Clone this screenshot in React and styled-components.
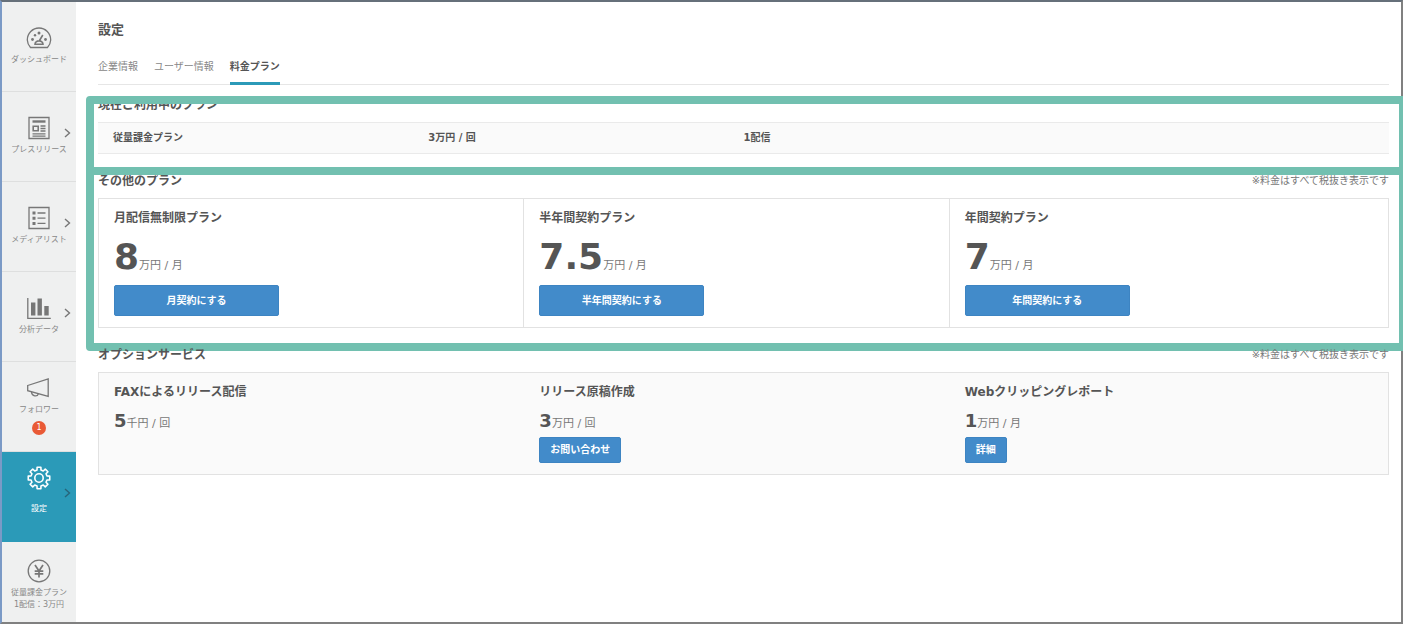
import React, { useState } from 'react'
import styled, { createGlobalStyle } from 'styled-components'

const GlobalStyle = createGlobalStyle`
  * {
    box-sizing: border-box;
  }

  body {
    margin: 0;
    overflow-x: hidden;
    background: #fff;
    color: #555;
    font-family: 'DejaVu Sans', 'Noto Sans CJK JP', sans-serif;
    font-size: 12px;
    line-height: 18px;
  }

  button {
    font-family: inherit;
  }
`

const Frame = styled.div`
  display: flex;
  min-height: 100vh;
  border: 2px solid #808080;
  border-top-color: #66707a;
  border-left-color: #7b9ac6;
`

const Sidebar = styled.nav`
  flex: none;
  width: 74px;
  background: #eff0f0;
`

const NavItem = styled.a`
  position: relative;
  display: flex;
  flex-direction: column;
  align-items: center;
  height: 90px;
  padding-top: ${(props) => props.$top || 24}px;
  border-bottom: 1px solid #dedfdf;
  color: #888;
  font-size: 8px;
  line-height: 12px;
  text-align: center;
  text-decoration: none;
  white-space: pre-line;

  &:last-child {
    height: auto;
    border-bottom: 0;
  }

  ${(props) =>
    props.$active &&
    `
    background: #2b9ab8;
    border-color: #2b9ab8;
    color: #fff;
  `}
`

const NavIcon = styled.svg`
  flex: none;
  width: 26px;
  height: 24px;
  margin-bottom: ${(props) => props.$gap || 4}px;
  fill: none;
  stroke: ${(props) => (props.$active ? '#fff' : '#777')};
  stroke-width: 1.3;
`

const Chevron = styled.svg`
  position: absolute;
  top: 36px;
  right: 5px;
  width: 7px;
  height: 10px;
  fill: none;
  stroke: ${(props) => (props.$active ? '#27657a' : '#777')};
  stroke-width: 1.4;
`

const Badge = styled.span`
  width: 14px;
  height: 14px;
  margin-top: 5px;
  border-radius: 50%;
  background: #e95a36;
  color: #fff;
  font-size: 8px;
  line-height: 14px;
`

const Main = styled.main`
  flex: 1;
  min-width: 0;
  padding: 18px 12px 24px 22px;
`

const PageTitle = styled.h1`
  margin: 0;
  font-size: 13px;
  line-height: 20px;
`

const Tabs = styled.div`
  display: flex;
  gap: 16px;
  margin: 16px 0 11px;
  border-bottom: 1px solid #e6e6e6;
`

const Tab = styled.button`
  margin: 0 0 -1px;
  padding: 0 0 4px;
  border: 0;
  border-bottom: 3px solid ${(props) => (props.$active ? '#2b9ab8' : 'transparent')};
  background: none;
  color: ${(props) => (props.$active ? '#555' : '#888')};
  font-size: 10px;
  font-weight: ${(props) => (props.$active ? 'bold' : 'normal')};
  line-height: 22px;
  cursor: pointer;
`

const Section = styled.section`
  position: relative;
  margin-bottom: 18px;
`

const SectionHead = styled.header`
  display: flex;
  justify-content: space-between;
  margin-bottom: 8px;
`

const SectionTitle = styled.h2`
  margin: 0;
  font-size: 12px;
  line-height: 18px;
`

const Note = styled.small`
  color: #777;
  font-size: 10px;
`

// Marker frame drawn over a section, it runs past the right edge of the page
const Highlight = styled.div`
  position: absolute;
  top: ${(props) => props.$top}px;
  right: -18px;
  bottom: ${(props) => props.$bottom}px;
  left: -12px;
  border: 8px solid #72c0b0;
  border-radius: 4px;
  pointer-events: none;
`

const CurrentPlan = styled.div`
  padding: 0 15px;
  border: 1px solid #eaeaea;
  border-width: 1px 0;
  background: #fafafa;
`

const PlanTable = styled.table`
  width: 100%;
  border-collapse: collapse;
  table-layout: fixed;
  font-size: 10px;
  font-weight: bold;

  td {
    width: 25%;
    padding: 0;
    line-height: 30px;
  }

  td:last-child {
    width: 50%;
  }
`

const Panel = styled.div`
  display: grid;
  grid-template-columns: 33% 33% 1fr;
  border: 1px solid #e2e2e2;
  background: ${(props) => (props.$muted ? '#fafafa' : '#fff')};
`

const Card = styled.div`
  padding: 10px 15px 11px;

  ${(props) =>
    props.$divided &&
    `
    &:not(:last-child) {
      border-right: 1px solid #e2e2e2;
    }
  `}
`

const CardTitle = styled.h3`
  margin: 0;
  font-size: 12px;
  line-height: 18px;
`

const Price = styled.p`
  margin: ${(props) => (props.$large ? '12px 0 10px' : '8px 0 4px')};
  color: #777;
  font-size: 11px;
  line-height: 12px;

  strong {
    color: #555;
    font-size: ${(props) => (props.$large ? 36 : 18)}px;
    line-height: ${(props) => (props.$large ? 36 : 24)}px;
  }
`

const Button = styled.button`
  display: block;
  width: ${(props) => (props.$wide ? '165px' : 'auto')};
  padding: 0 10px;
  border: 1px solid #3d84c2;
  border-radius: 2px;
  background: #428bca;
  color: #fff;
  font-size: 10px;
  font-weight: bold;
  line-height: ${(props) => (props.$wide ? 29 : 24)}px;
  cursor: pointer;
`

const gearPath = () => {
  const points = []
  for (let i = 0; i < 8; i++) {
    const tooth = [
      [-14, 8.2],
      [-10, 10.9],
      [10, 10.9],
      [14, 8.2],
    ]
    tooth.forEach(([offset, r]) => {
      const a = ((i * 45 + offset) * Math.PI) / 180
      points.push(`${(13 + r * Math.sin(a)).toFixed(2)} ${(12 - r * Math.cos(a)).toFixed(2)}`)
    })
  }
  return `M${points.join('L')}Z`
}

const icons = {
  dashboard: (
    <>
      <path d="M4.5 21.5A11.7 11.7 0 0 1 1.3 14C1.3 7.5 6.5 2 13 2s11.7 5.5 11.7 12a11.7 11.7 0 0 1-3.2 7.5z" />
      <path d="M9 18.3a4 3.4 0 0 1 8 0zM13.5 14.5l3.3-5.5" strokeWidth="1.6" />
      <g fill="#777" stroke="none">
        <circle cx="6.5" cy="13.5" r="1.4" />
        <circle cx="9" cy="9.3" r="1.2" />
        <circle cx="13" cy="7" r="1.5" />
        <circle cx="19.5" cy="13.5" r="1.4" />
      </g>
    </>
  ),
  press: (
    <>
      <path d="M3 1.5h20v21H3z" />
      <path d="M6.5 5.5h13" strokeWidth="2.4" />
      <path d="M7.2 10.2h5v4.6h-5z" strokeWidth="1.6" />
      <path d="M14.5 10h5M14.5 12.5h5M14.5 15h5M6.5 17.8h13M6.5 20.2h13" />
    </>
  ),
  list: (
    <>
      <path d="M3 1.5h20v21H3z" />
      <path d="M11.5 7h8M11.5 12.2h8M11.5 17.4h8" />
      <path d="M6.5 7h3M6.5 12.2h3M6.5 17.4h3" strokeWidth="3" />
    </>
  ),
  chart: (
    <>
      <path d="M1.8 2v20.3h23" />
      <path d="M7.2 6.5v13M13.7 2.5v17M20.5 10v9.5" strokeWidth="4.4" />
    </>
  ),
  megaphone: (
    <>
      <path d="M1.7 9.5L22.2 3v17.5L1.7 14.7z" />
      <path d="M5.5 16c.3 4.6 6 5 6.8 1.8" />
    </>
  ),
  gear: (
    <>
      <path d={gearPath()} strokeWidth="1.6" strokeLinejoin="round" />
      <circle cx="13" cy="12" r="4.2" strokeWidth="1.6" />
    </>
  ),
  yen: (
    <>
      <circle cx="13" cy="12" r="10.8" />
      <path d="M9 6l4 6 4-6M13 12v6.5M8.7 12.2h8.6M8.7 14.8h8.6" strokeWidth="1.7" />
    </>
  ),
}

const navItems = [
  { label: 'ダッシュボード', icon: 'dashboard' },
  { label: 'プレスリリース', icon: 'press', arrow: true },
  { label: 'メディアリスト', icon: 'list', arrow: true },
  { label: '分析データ', icon: 'chart', arrow: true },
  { label: 'フォロワー', icon: 'megaphone', top: 14, badge: 1 },
  { label: '設定', icon: 'gear', top: 14, gap: 13, arrow: true, active: true },
  { label: '従量課金プラン\n1配信：3万円', icon: 'yen', top: 17 },
]

const tabs = ['企業情報', 'ユーザー情報', '料金プラン']

const plans = [
  { title: '月配信無制限プラン', price: '8', unit: '万円 / 月', action: '月契約にする' },
  { title: '半年間契約プラン', price: '7.5', unit: '万円 / 月', action: '半年間契約にする' },
  { title: '年間契約プラン', price: '7', unit: '万円 / 月', action: '年間契約にする' },
]

const options = [
  { title: 'FAXによるリリース配信', price: '5', unit: '千円 / 回' },
  { title: 'リリース原稿作成', price: '3', unit: '万円 / 回', action: 'お問い合わせ' },
  { title: 'Webクリッピングレポート', price: '1', unit: '万円 / 月', action: '詳細' },
]

const PlanCard = ({ plan, large }) => (
  <Card $divided={large}>
    <CardTitle>{plan.title}</CardTitle>
    <Price $large={large}>
      <strong>{plan.price}</strong>
      {plan.unit}
    </Price>
    {plan.action && (
      <Button type="button" $wide={large}>
        {plan.action}
      </Button>
    )}
  </Card>
)

const App = () => {
  const [tab, setTab] = useState('料金プラン')

  return (
    <>
      <GlobalStyle />
      <Frame lang="ja">
        <Sidebar>
          {navItems.map((item) => (
            <NavItem key={item.icon} href="#" $top={item.top} $active={item.active}>
              <NavIcon viewBox="0 0 26 24" $gap={item.gap} $active={item.active} aria-hidden="true">
                {icons[item.icon]}
              </NavIcon>
              {item.label}
              {item.badge && <Badge>{item.badge}</Badge>}
              {item.arrow && (
                <Chevron viewBox="0 0 7 10" $active={item.active} aria-hidden="true">
                  <path d="M1 1l4.5 4L1 9" />
                </Chevron>
              )}
            </NavItem>
          ))}
        </Sidebar>
        <Main>
          <PageTitle>設定</PageTitle>
          <Tabs role="tablist">
            {tabs.map((name) => (
              <Tab
                key={name}
                type="button"
                role="tab"
                aria-selected={name === tab}
                $active={name === tab}
                onClick={() => setTab(name)}
              >
                {name}
              </Tab>
            ))}
          </Tabs>

          <Section>
            <SectionHead>
              <SectionTitle>現在ご利用中のプラン</SectionTitle>
            </SectionHead>
            <CurrentPlan>
              <PlanTable>
                <tbody>
                  <tr>
                    <td>従量課金プラン</td>
                    <td>3万円 / 回</td>
                    <td>1配信</td>
                  </tr>
                </tbody>
              </PlanTable>
            </CurrentPlan>
            <Highlight $top={0} $bottom={-21} />
          </Section>

          <Section>
            <SectionHead>
              <SectionTitle>その他のプラン</SectionTitle>
              <Note>※料金はすべて税抜き表示です</Note>
            </SectionHead>
            <Panel>
              {plans.map((plan) => (
                <PlanCard key={plan.title} plan={plan} large />
              ))}
            </Panel>
            <Highlight $top={-5} $bottom={-23} />
          </Section>

          <Section>
            <SectionHead>
              <SectionTitle>オプションサービス</SectionTitle>
              <Note>※料金はすべて税抜き表示です</Note>
            </SectionHead>
            <Panel $muted>
              {options.map((plan) => (
                <PlanCard key={plan.title} plan={plan} />
              ))}
            </Panel>
          </Section>
        </Main>
      </Frame>
    </>
  )
}

export default App
